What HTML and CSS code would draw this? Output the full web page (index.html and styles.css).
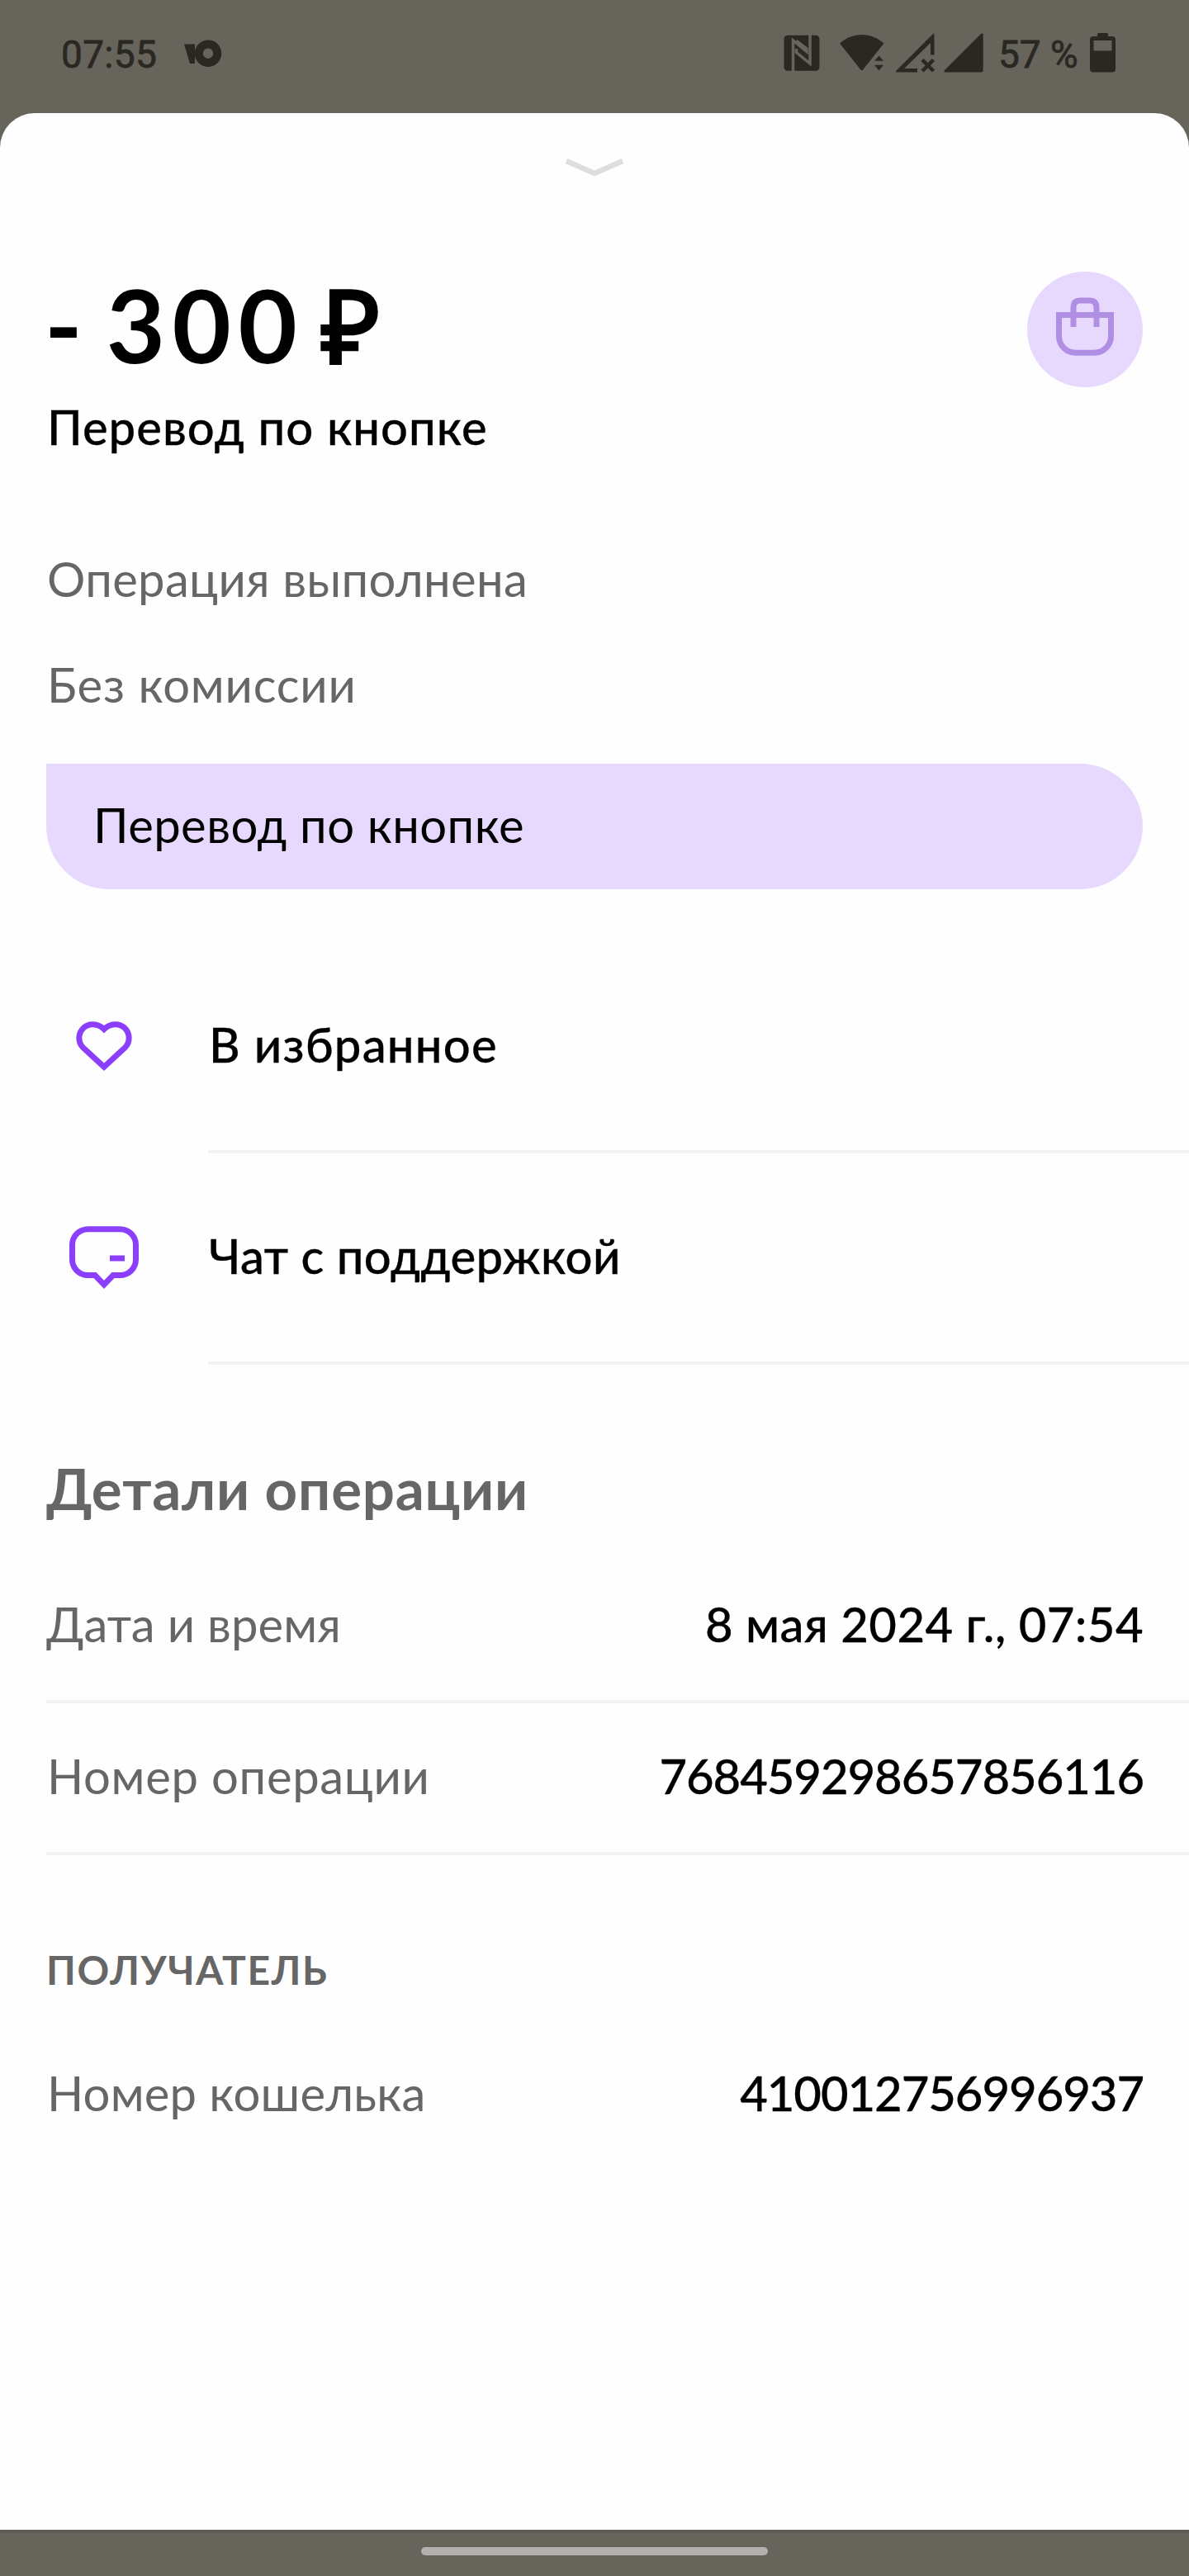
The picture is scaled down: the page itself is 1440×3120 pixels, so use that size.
FILE: index.html
```
<!DOCTYPE html>
<html lang="ru">
<head>
<meta charset="utf-8">
<title>Перевод по кнопке</title>
<link rel="stylesheet" href="styles.css">
</head>
<body>
<div class="screen">
  <header class="statusbar">
    <span class="clock">07:55</span>
    <svg class="brand" width="46" height="34" viewBox="0 0 46 34"><path d="M0 5.500H13V29H7Z"/><path fill-rule="evenodd" d="M29 .5a16.200 16.200 0 1 0 0 32.400a16.200 16.200 0 1 0 0-32.400ZM29 10.500a6.200 6.200 0 1 1 0 12.400a6.200 6.200 0 1 1 0-12.400Z"/></svg>
    <div class="indicators">
      <svg class="nfc" width="44" height="48" viewBox="0 0 44 48"><rect x=".5" y="2.700" width="43" height="43" rx="4.500"/><path class="cut" d="M11.500 46V9L28 22.500V19L15.500 9.500M32 2V37L15.500 23.500V19"/></svg>
      <svg class="wifi" width="54" height="48" viewBox="0 0 54 48"><path d="M0 12.500C16-1.500 37.500-1.500 53.500 12.500L28.500 44Q26.800 46.500 25 44ZM42 33.700H53L47.500 27.500ZM42 38.700H53L47.500 45.500Z"/></svg>
      <svg class="nosim" width="50" height="48" viewBox="0 0 50 48"><path fill-rule="evenodd" d="M46.500.5V26.500H42V12L10 43H26V47.500H1Q-1 47.500 .5 45.500L45 1Z"/><path class="cross" d="M32 32.500L45.500 46M45.500 32.500L32 46"/></svg>
      <svg class="signal" width="48" height="48" viewBox="0 0 48 48"><path d="M1 45L45 1Q47.700-.5 47.700 2V45Q47.700 47.500 45 47.500H2Q-.5 47.500 1 45Z"/></svg>
      <span class="percent">57 %</span>
      <svg class="battery" width="31" height="48" viewBox="0 0 31 48"><path fill-rule="evenodd" d="M9 1.500Q9 0 10.500 0H20.500Q22 0 22 1.500V4H27Q31 4 31 8V43.500Q31 47.500 27 47.500H4Q0 47.500 0 43.500V8Q0 4 4 4H9ZM4.500 9V21.500H26.500V9Z"/></svg>
    </div>
  </header>

  <main class="sheet">
    <div class="grabber">
      <svg width="72" height="24" viewBox="0 0 72 24"><path d="M2 4L36 19L70 4"/></svg>
    </div>

    <section class="summary">
      <div class="summary-text">
        <h1 class="amount">- 300 ₽</h1>
        <p class="subtitle">Перевод по кнопке</p>
      </div>
      <svg class="bag" width="140" height="140" viewBox="0 0 140 140"><circle cx="70" cy="70" r="70"/><path d="M38.500 52.500H101.500V78A20 20 0 0 1 81.500 98.200H58.500A20 20 0 0 1 38.500 78ZM56 67V43.500Q56 35 64.500 35H75.500Q84 35 84 43.500V67"/></svg>
    </section>

    <section class="notes">
      <p class="note note-state">Операция выполнена</p>
      <p class="note note-fee">Без комиссии</p>
      <p class="message">Перевод по кнопке</p>
    </section>

    <ul class="actions">
      <li class="action">
        <span class="action-icon"><svg width="68" height="60" viewBox="0 0 68 60"><path d="M34 9.500C26.500 2 15 1.800 8.800 8.300C2.200 15 2.200 25.500 8.800 32L34 55.200L59.200 32C65.800 25.500 65.800 15 59.200 8.300C53 1.800 41.500 2 34 9.500Z"/></svg></span>
        <span class="action-label favorite">В избранное</span>
      </li>
      <li class="action">
        <span class="action-icon"><svg width="84" height="76" viewBox="0 0 84 76"><path d="M22.500 3.700H61.500A19 19 0 0 1 80.500 22.700V40.500A19 19 0 0 1 61.500 59.500H53L42 71L31 59.500H22.500A19 19 0 0 1 3.500 40.500V22.700A19 19 0 0 1 22.500 3.700ZM49 39H67"/></svg></span>
        <span class="action-label">Чат с поддержкой</span>
      </li>
    </ul>

    <h2 class="details-title">Детали операции</h2>
    <dl class="details">
      <div class="row ruled"><dt>Дата и время</dt><dd class="date">8 мая 2024 г., 07:54</dd></div>
      <div class="row ruled"><dt class="wide">Номер операции</dt><dd>768459298657856116</dd></div>
    </dl>

    <h3 class="recipient-title">ПОЛУЧАТЕЛЬ</h3>
    <dl class="details">
      <div class="row"><dt class="wallet">Номер кошелька</dt><dd>410012756996937</dd></div>
    </dl>
  </main>

  <footer class="navbar"><span class="home"></span></footer>
</div>
</body>
</html>
```
FILE: styles.css
```
* { box-sizing: border-box; margin: 0; padding: 0; }

body {
  background: #67645c;
  color: #000;
  font-family: Lato, "Open Sans", sans-serif;
  font-size: 58px;
}

svg { display: block; flex: none; }

.screen {
  display: flex;
  flex-direction: column;
  width: 1440px;
  height: 3120px;
  background: #67645c;
}

/* Status bar */
.statusbar {
  display: flex;
  align-items: flex-start;
  height: 137px;
  padding: 40px 89px 0 74px;
  color: #2a2823;
  fill: #2a2823;
  font: 400 46px/53px Roboto, sans-serif;
}
.clock { letter-spacing: 0.3px; -webkit-text-stroke: 0.8px; }
.brand { margin: 8px 0 0 33px; }
.indicators { display: flex; margin-left: auto; }
.wifi { margin-left: 24px; }
.nosim { margin-left: 14px; }
.signal { margin-left: 8px; }
.percent { width: 95px; margin-left: 18px; white-space: nowrap; -webkit-text-stroke: 0.8px; }
.battery { margin-left: 16px; }
.cross { stroke: #2a2823; stroke-width: 4.5; }
.cut { fill: none; stroke: #67645c; stroke-width: 3.5; }

/* Bottom sheet */
.sheet {
  flex: none;
  height: 2927px;
  background: #fefefe;
  border-radius: 42px 42px 0 0;
}

.grabber { display: flex; justify-content: center; height: 192px; padding-top: 54px; }
.grabber path { fill: none; stroke: #dedede; stroke-width: 6.5; }

.summary { display: flex; justify-content: space-between; padding: 0 56px; }
.amount { margin-left: -2px; font-size: 123px; font-weight: 700; line-height: 127px; letter-spacing: 8.5px; word-spacing: -18px; white-space: nowrap; }
.subtitle { margin: 25px 0 0 1px; font-weight: 500; line-height: 71px; letter-spacing: 1px; -webkit-text-stroke: 0.3px; }
.bag circle { fill: #e7d9fe; }
.bag path { fill: none; stroke: #af8ee3; stroke-width: 7; }

.notes { margin-top: 112px; padding: 0 56px; }
.note { padding-left: 1px; color: #666; line-height: 73px; }
.note-state { letter-spacing: 0.32px; }
.note-fee { margin-top: 55px; letter-spacing: 0.8px; }
.message {
  height: 152px;
  margin-top: 60px;
  padding-left: 57px;
  border-radius: 0 76px 76px 76px;
  background: #e7d9fe;
  line-height: 147px;
  letter-spacing: 0.42px;
}

.actions { margin-top: 64px; list-style: none; }
.action { display: flex; height: 256px; }
.action-icon { display: flex; flex: none; align-items: center; justify-content: center; width: 252px; height: 252px; }
.action-icon svg { overflow: visible; }
.action-icon path { fill: none; stroke: #8b3ffd; stroke-width: 7; }
.action-label {
  flex: 1;
  padding-left: 1px;
  border-bottom: 4px solid #f2f2f2;
  font-weight: 500;
  line-height: 247px;
  letter-spacing: 0.36px;
  -webkit-text-stroke: 0.3px;
}
.favorite { letter-spacing: 1.2px; }

.details-title { margin: 107px 0 34px 56px; color: #666; font-size: 69px; font-weight: 700; line-height: 85px; letter-spacing: 0.79px; }
.details { padding-left: 56px; }
.row { display: flex; justify-content: space-between; height: 180px; padding-right: 55px; line-height: 175px; }
.ruled { height: 184px; border-bottom: 4px solid #f2f2f2; }
.row dt { color: #666; letter-spacing: 0.1px; }
.row .wide { padding-left: 1px; letter-spacing: 0.65px; }
.row .wallet { padding-left: 1px; letter-spacing: 0.2px; }
.row dd { font-weight: 500; letter-spacing: -1.05px; -webkit-text-stroke: 0.3px; }
.row .date { letter-spacing: 0.42px; }

.recipient-title { margin: 108px 0 31px 56px; color: #666; font-size: 48px; font-weight: 700; line-height: 61px; letter-spacing: 1.7px; }

/* Gesture bar */
.navbar { display: flex; justify-content: center; height: 56px; padding-top: 17px; border-top: 4px solid #5d5b53; }
.home { width: 420px; height: 10px; border-radius: 5px; background: #b2b1ad; }
```
